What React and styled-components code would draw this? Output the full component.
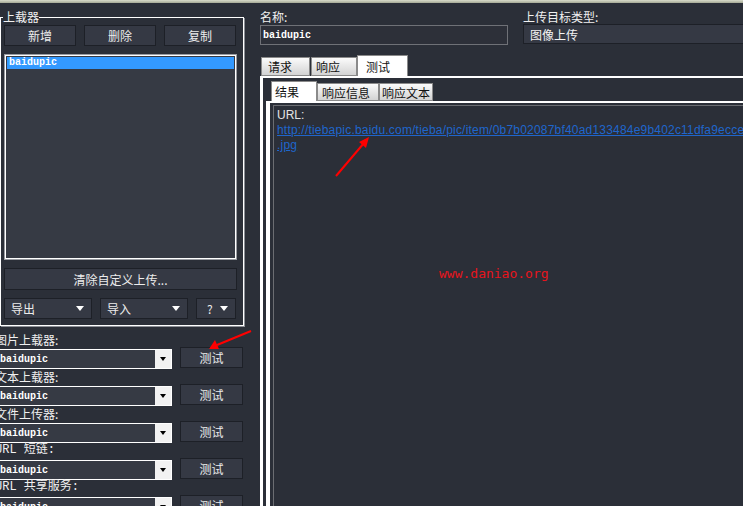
import styled, { createGlobalStyle } from "styled-components";

const GlobalStyle = createGlobalStyle`
  html, body {
    margin: 0;
    padding: 0;
    background: #2b2f38;
  }
  body {
    font-family: "Noto Sans CJK SC", "Liberation Sans", sans-serif;
    font-size: 12px;
    color: #e8e8e8;
  }
`;

const Page = styled.div`
  position: relative;
  width: 743px;
  height: 506px;
  overflow: hidden;
  background: #2b2f38;
  display: flex;
  flex-direction: column;
`;

const TopStrip = styled.div`
  flex-shrink: 0;
  height: 3px;
  background: linear-gradient(#d9dccb, #a5a996);
`;

const Main = styled.div`
  flex: 1;
  min-height: 0;
  display: grid;
  grid-template-columns: 244px 1fr;
  column-gap: 16px;
`;

/* ---------- left column ---------- */

const LeftColumn = styled.div`
  display: flex;
  flex-direction: column;
`;

const GroupBox = styled.fieldset`
  box-sizing: border-box;
  width: 244px;
  margin: 7px 0 0 0;
  padding: 1px 6px 6px 3px;
  border: 1px solid #ffffff;
  box-shadow: 1px 1px 0 #8c8f96;
  min-width: 0;
`;

const Legend = styled.legend`
  padding: 0;
  margin-left: -1px;
  font-size: 12px;
  line-height: 14px;
  color: #f0f0f0;
`;

const ButtonRow = styled.div`
  display: grid;
  grid-template-columns: repeat(3, 72px);
  column-gap: 8px;
`;

const DarkButton = styled.div`
  box-sizing: border-box;
  height: ${(p) => p.$h || 21}px;
  display: flex;
  align-items: center;
  justify-content: center;
  background: #353944;
  border: 1px solid #1d2027;
  color: #ececec;
  font-size: 12px;
`;

const ListBox = styled.div`
  box-sizing: border-box;
  margin-top: 8px;
  height: 206px;
  background: #363a44;
  border: 1px solid #9a9ca2;
  box-shadow: inset 0 0 0 1px #ffffff;
  padding: 2px;
`;

const ListItem = styled.div`
  height: 12px;
  line-height: 12px;
  padding-left: 2px;
  background: ${(p) => (p.$selected ? "#3399ff" : "transparent")};
  color: #ffffff;
  font-family: "Liberation Mono", monospace;
  font-size: 10px;
  font-weight: bold;
`;

const ClearRow = styled.div`
  margin-top: 8px;
`;

const MenuRow = styled.div`
  margin-top: 8px;
  display: grid;
  grid-template-columns: 88px 88px 40px;
  column-gap: 8px;
`;

const MenuButton = styled.div`
  box-sizing: border-box;
  height: 21px;
  display: flex;
  align-items: center;
  justify-content: space-between;
  padding: 0 7px 0 ${(p) => p.$pl || 6}px;
  background: #353944;
  border: 1px solid #1d2027;
  color: #ececec;
  font-size: 12px;
`;

const DownTri = styled.span`
  width: 0;
  height: 0;
  border-left: ${(p) => p.$s || 4}px solid transparent;
  border-right: ${(p) => p.$s || 4}px solid transparent;
  border-top: ${(p) => (p.$s || 4) + 1}px solid ${(p) => p.$color || "#ffffff"};
`;

const Selectors = styled.div`
  margin: 6px 0 0 -5px;
  display: flex;
  flex-direction: column;
`;

const SelectorLabel = styled.div`
  height: 15px;
  line-height: 15px;
  font-size: 12px;
  color: #f0f0f0;
  white-space: nowrap;
  font-family: ${(p) => (p.$mono ? '"Liberation Mono", "Noto Sans CJK SC", monospace' : "inherit")};
`;

const SelectorRow = styled.div`
  height: 22px;
  display: grid;
  grid-template-columns: 177px 63px;
  column-gap: 8px;
`;

const Combo = styled.div`
  box-sizing: border-box;
  margin-top: 2px;
  height: 20px;
  display: flex;
  align-items: stretch;
  background: #363a44;
  border: 1px solid #ffffff;
`;

const ComboText = styled.div`
  flex: 1;
  display: flex;
  align-items: center;
  padding-left: 4px;
  color: #ffffff;
  font-family: "Liberation Mono", monospace;
  font-size: 10px;
  font-weight: bold;
`;

const ComboArrow = styled.div`
  width: 16px;
  display: flex;
  align-items: center;
  justify-content: center;
  background: #f2f2f2;
`;

/* ---------- right column ---------- */

const RightColumn = styled.div`
  display: flex;
  flex-direction: column;
  min-width: 0;
`;

const FieldsRow = styled.div`
  margin-top: 7px;
  display: grid;
  grid-template-columns: 248px 260px;
  column-gap: 15px;
`;

const FieldLabel = styled.div`
  height: 15px;
  line-height: 14px;
  font-size: 12px;
  color: #f0f0f0;
`;

const NameInput = styled.div`
  box-sizing: border-box;
  height: 20px;
  display: flex;
  align-items: center;
  padding-left: 2px;
  background: #2d3039;
  border: 1px solid #6f7177;
  color: #ffffff;
  font-family: "Liberation Mono", monospace;
  font-size: 10px;
  font-weight: bold;
`;

const TypeCombo = styled.div`
  box-sizing: border-box;
  margin-top: -1px;
  height: 20px;
  display: flex;
  align-items: center;
  padding-left: 6px;
  background: #353944;
  border: 1px solid #1d2027;
  color: #f4f4f4;
  font-size: 12px;
`;

const TabStrip = styled.div`
  display: flex;
  align-items: flex-end;
  height: ${(p) => p.$h}px;
  padding-left: ${(p) => p.$pl}px;
  margin-top: ${(p) => p.$mt || 0}px;
`;

const Tab = styled.div`
  box-sizing: border-box;
  width: ${(p) => p.$w}px;
  height: ${(p) => (p.$active ? p.$h + 2 : p.$h)}px;
  margin-right: ${(p) => p.$gap || 0}px;
  padding-left: ${(p) => p.$pl}px;
  display: flex;
  align-items: center;
  border: 1px solid #8a8a8a;
  border-bottom: ${(p) => (p.$active ? "none" : "1px solid #8a8a8a")};
  background: ${(p) =>
    p.$active ? "#ffffff" : "linear-gradient(#fbfbfb, #d3d3d3)"};
  color: #111111;
  font-size: 12px;
  white-space: nowrap;
`;

const OuterPanel = styled.div`
  flex: 1;
  min-height: 0;
  display: flex;
  flex-direction: column;
  border-left: 3px solid #ffffff;
  border-top: 2px solid #ffffff;
  padding: 2px 0 0 3px;
`;

const InnerPanel = styled.div`
  flex: 1;
  min-height: 0;
  display: flex;
  flex-direction: column;
  border-left: 4px solid #ffffff;
  border-top: 2px solid #ffffff;
  padding: 2px 0 0 3px;
`;

const Result = styled.div`
  flex: 1;
  min-height: 0;
  border: 1px solid #6b6d72;
  border-right: none;
  padding: 2px 0 0 3px;
  font-family: "Liberation Sans", Arial, sans-serif;
  font-size: 12px;
  line-height: 15px;
  color: #e4e4e4;
  white-space: nowrap;
  overflow: hidden;
`;

const Link = styled.a`
  color: #1f66cc;
  text-decoration: underline;
  letter-spacing: 0.2px;
`;

const Watermark = styled.div`
  position: absolute;
  left: 439px;
  top: 266px;
  color: #e8141c;
  font-family: "DejaVu Sans Mono", "Liberation Mono", monospace;
  font-size: 13px;
  line-height: 16px;
`;

const Annotations = styled.svg`
  position: absolute;
  left: 0;
  top: 0;
  pointer-events: none;
`;

const selectors = [
  { label: "图片上载器:" },
  { label: "文本上载器:" },
  { label: "文件上传器:" },
  { label: "URL 短链:", mono: true },
  { label: "URL 共享服务:", mono: true },
];

const App = () => {
  return (
    <>
      <GlobalStyle />
      <Page>
        <TopStrip />
        <Main>
          <LeftColumn>
            <GroupBox>
              <Legend>上载器</Legend>
              <ButtonRow>
                <DarkButton>新增</DarkButton>
                <DarkButton>删除</DarkButton>
                <DarkButton>复制</DarkButton>
              </ButtonRow>
              <ListBox>
                <ListItem $selected>baidupic</ListItem>
              </ListBox>
              <ClearRow>
                <DarkButton $h={22}>清除自定义上传...</DarkButton>
              </ClearRow>
              <MenuRow>
                <MenuButton>
                  导出 <DownTri />
                </MenuButton>
                <MenuButton>
                  导入 <DownTri />
                </MenuButton>
                <MenuButton $pl={10}>
                  ? <DownTri />
                </MenuButton>
              </MenuRow>
            </GroupBox>

            <Selectors>
              {selectors.map((s) => (
                <div key={s.label}>
                  <SelectorLabel $mono={s.mono}>{s.label}</SelectorLabel>
                  <SelectorRow>
                    <Combo>
                      <ComboText>baidupic</ComboText>
                      <ComboArrow>
                        <DownTri $color="#000000" $s={3} />
                      </ComboArrow>
                    </Combo>
                    <DarkButton>测试</DarkButton>
                  </SelectorRow>
                </div>
              ))}
            </Selectors>
          </LeftColumn>

          <RightColumn>
            <FieldsRow>
              <div>
                <FieldLabel>名称:</FieldLabel>
                <NameInput>baidupic</NameInput>
              </div>
              <div>
                <FieldLabel>上传目标类型:</FieldLabel>
                <TypeCombo>图像上传</TypeCombo>
              </div>
            </FieldsRow>

            <TabStrip $h={21} $pl={1} $mt={10}>
              <Tab $w={49} $h={19} $pl={6} $gap={1}>请求</Tab>
              <Tab $w={46} $h={19} $pl={4}>响应</Tab>
              <Tab $w={51} $h={19} $pl={8} $active>测试</Tab>
            </TabStrip>

            <OuterPanel>
              <TabStrip $h={21} $pl={5}>
                <Tab $w={46} $h={18} $pl={3} $active>结果</Tab>
                <Tab $w={62} $h={18} $pl={4}>响应信息</Tab>
                <Tab $w={54} $h={18} $pl={2}>响应文本</Tab>
              </TabStrip>
              <InnerPanel>
                <Result>
                  URL:
                  <br />
                  <Link href="#">
                    http://tiebapic.baidu.com/tieba/pic/item/0b7b02087bf40ad133484e9b402c11dfa9ecce
                  </Link>
                  <br />
                  <Link href="#">.jpg</Link>
                </Result>
              </InnerPanel>
            </OuterPanel>
          </RightColumn>
        </Main>

        <Watermark>www.daniao.org</Watermark>

        <Annotations width="743" height="506">
          <line x1="336" y1="176" x2="364" y2="143" stroke="#ff0000" strokeWidth="2" />
          <polygon points="369,137 359,142 366,148" fill="#ff0000" />
          <line x1="251" y1="331" x2="217" y2="345" stroke="#ff0000" strokeWidth="2" />
          <polygon points="209,349 215,340 219,349" fill="#ff0000" />
        </Annotations>
      </Page>
    </>
  );
};

export default App;
